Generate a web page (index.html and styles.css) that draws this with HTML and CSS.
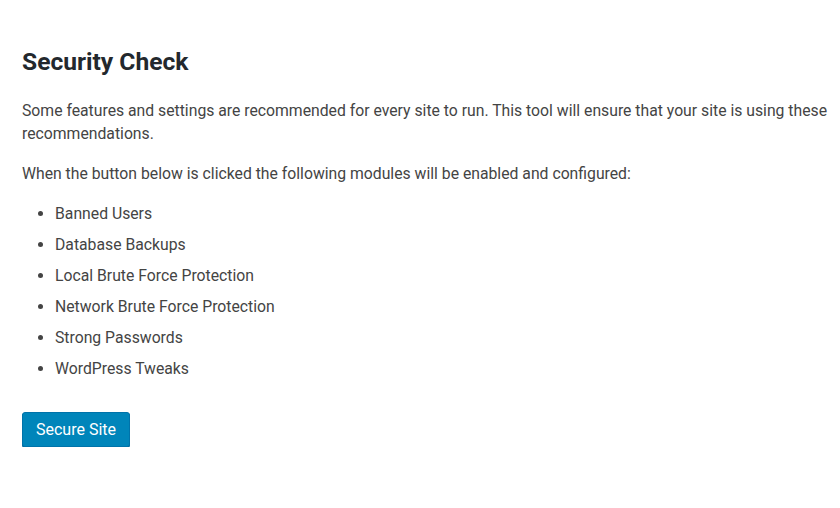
FILE: index.html
```html
<!DOCTYPE html>
<html>
<head>
<meta charset="utf-8">
<link rel="stylesheet" href="styles.css">
</head>
<body>
<div class="wrap">
  <h1 class="title">Security Check</h1>
  <p class="text">Some features and settings are recommended for every site to run. This tool will ensure that your site is using these recommendations.</p>
  <p class="text">When the button below is clicked the following modules will be enabled and configured:</p>
  <ul class="modules">
    <li>Banned Users</li>
    <li>Database Backups</li>
    <li>Local Brute Force Protection</li>
    <li>Network Brute Force Protection</li>
    <li>Strong Passwords</li>
    <li>WordPress Tweaks</li>
  </ul>
  <button class="btn">Secure Site</button>
</div>
</body>
</html>
```
FILE: styles.css
```css
html, body {
  margin: 0;
  padding: 0;
  background: #fff;
}
body {
  font-family: Roboto, "Liberation Sans", sans-serif;
  color: #444;
}
.wrap {
  padding: 44px 0 0 22px;
}
.title {
  margin: 0 0 19px;
  font-size: 24.6px;
  font-weight: 700;
  color: #23282d;
  line-height: 36px;
}
.text {
  margin: 0 0 17px;
  font-size: 15.75px;
  line-height: 23px;
}
.modules {
  margin: 0 0 32px;
  padding: 0 0 0 33px;
  font-size: 15.75px;
  line-height: 23px;
}
.modules li {
  margin-bottom: 8px;
}
.btn {
  display: block;
  font-family: inherit;
  font-size: 16px;
  color: #fff;
  background: #0085ba;
  border: 1px solid #0073aa;
  border-radius: 3px;
  box-shadow: 0 1px 0 #006799;
  height: 35px;
  width: 108px;
  padding: 0;
}
```
